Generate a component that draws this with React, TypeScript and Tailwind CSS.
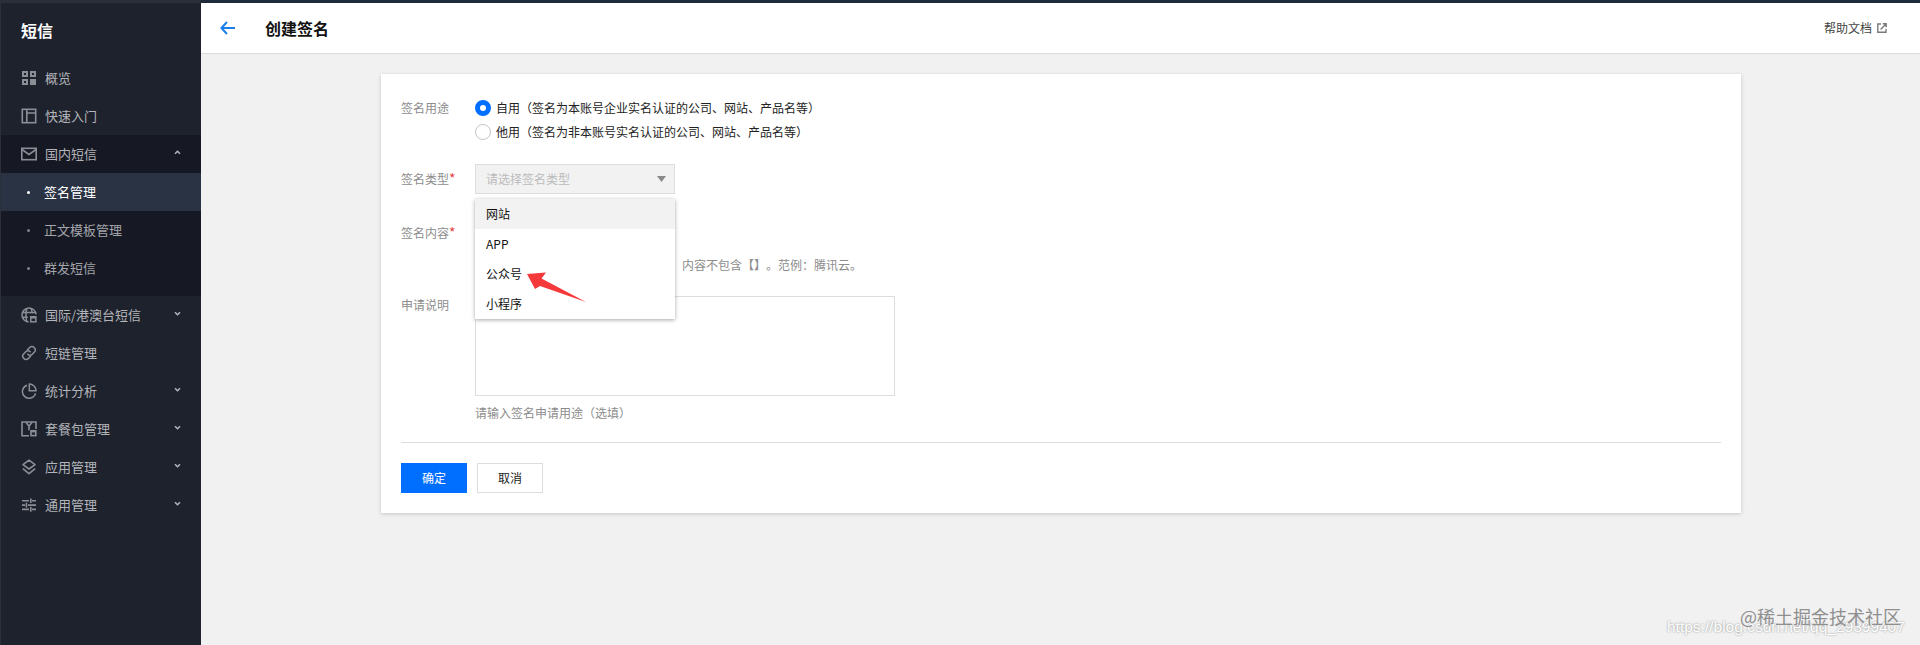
import React from "react";

const C = "#8b8e95";

function IcOverview() {
  return (
    <svg width="16" height="16" viewBox="0 0 16 16" fill={C} fillRule="evenodd">
      <path d="M1 1h6v6H1zM3 3v2h2V3z" />
      <path d="M9 1h6v6H9zM11 3v2h2V3z" />
      <path d="M1 9h6v6H1zM3 11v2h2v-2z" />
      <path d="M9 9h6v6H9z" />
    </svg>
  );
}
function IcBook() {
  return (
    <svg width="16" height="16" viewBox="0 0 16 16" fill="none" stroke={C} strokeWidth="1.6">
      <rect x="1.3" y="1.3" width="13.4" height="13.4" />
      <path d="M5.8 1.3v13.4M5.8 5h8.9" />
    </svg>
  );
}
function IcMail() {
  return (
    <svg width="16" height="16" viewBox="0 0 16 16" fill="none" stroke={C} strokeWidth="1.6">
      <rect x="0.8" y="2.3" width="14.4" height="11.4" />
      <path d="M1 3.5l7 5 7-5" />
    </svg>
  );
}
function IcGlobe() {
  return (
    <svg width="16" height="16" viewBox="0 0 16 16" fill="none" stroke={C} strokeWidth="1.5">
      <path d="M7.6 15A7 7 0 1 1 15 7.4" />
      <path d="M6 1.3C4.6 4 4.6 11 6 14.7M10 1.3c.8 1.6 1.1 3.4 1.2 5.2M1.2 5.6h13.4M1.2 10.2h5.6" />
      <path d="M9 9h6.6v6.6H9z" fill={C} stroke="none" />
      <path d="M10.5 11.5h3.6v2.6h-3.6z" fill="#1e222d" stroke="none" />
    </svg>
  );
}
function IcLink() {
  return (
    <svg width="16" height="16" viewBox="0 0 16 16" fill="none" stroke={C} strokeWidth="1.5" strokeLinecap="round">
      <path d="M6.6 4.6l2-2a3.1 3.1 0 0 1 4.6 0 3.2 3.2 0 0 1 .2 4.5l-2.1 2.2a3.1 3.1 0 0 1-4.5 0" />
      <path d="M9.4 11.4l-2 2a3.1 3.1 0 0 1-4.6 0 3.2 3.2 0 0 1-.2-4.5l2.1-2.2a3.1 3.1 0 0 1 4.5 0" />
    </svg>
  );
}
function IcPie() {
  return (
    <svg width="16" height="16" viewBox="0 0 16 16" fill="none" stroke={C} strokeWidth="1.5">
      <path d="M6 2.2A6.7 6.7 0 1 0 14.6 10.4" />
      <path d="M8.3 1a6.7 6.7 0 0 1 6.7 6.8H8.3z" />
    </svg>
  );
}
function IcPackage() {
  return (
    <svg width="16" height="16" viewBox="0 0 16 16" fill="none" stroke={C} strokeWidth="1.6">
      <path d="M8 14.8H1V1h14v7" />
      <path d="M5 1.2l3 4 3-4" />
      <path d="M8 5.2v4" />
      <path d="M9.2 9h6.4v6.4H9.2z" fill={C} stroke="none" />
      <path d="M10.8 11.4h3.2v2.4h-3.2z" fill="#1e222d" stroke="none" />
    </svg>
  );
}
function IcLayers() {
  return (
    <svg width="16" height="16" viewBox="0 0 16 16" fill="none" stroke={C} strokeWidth="1.6" strokeLinejoin="round">
      <path d="M8 1.2l6 4.4-6 4.4-6-4.4z" />
      <path d="M1.8 9.6L8 14.6l6.2-5" />
    </svg>
  );
}
function IcSliders() {
  return (
    <svg width="16" height="16" viewBox="0 0 16 16" fill={C}>
      <path d="M1 3h7v1.6H1zM11 3h4v1.6h-4zM9 1.5h1.6v4.6H9z" />
      <path d="M1 7.3h3v1.6H1zM7 7.3h8v1.6H7zM4.6 5.8h1.6v4.6H4.6z" />
      <path d="M1 11.6h7v1.6H1zM11 11.6h4v1.6h-4zM9 10.1h1.6v4.6H9z" />
    </svg>
  );
}
function Chevron({ up }: { up?: boolean }) {
  return (
    <svg width="7" height="5" viewBox="0 0 8 6" fill="none" stroke="#b4b6bb" strokeWidth="1.8" className={`mb-[3px] ${up ? "" : "rotate-180"}`}>
      <path d="M1 4.5l3-3 3 3" />
    </svg>
  );
}

function NavRow({
  icon,
  label,
  chevron,
  up,
  dark,
}: {
  icon: React.ReactNode;
  label: string;
  chevron?: boolean;
  up?: boolean;
  dark?: boolean;
}) {
  return (
    <div className={`relative flex h-[38px] items-center pl-[20px] pr-[20px] text-[13px] text-[#b3b5ba] ${dark ? "bg-[#161823]" : ""}`}>
      <span className="mr-[8px] flex h-[16px] w-[16px] items-center justify-center">{icon}</span>
      <span className="flex-1 whitespace-nowrap">{label}</span>
      {chevron && <Chevron up={up} />}
    </div>
  );
}

function SubRow({ label, active }: { label: string; active?: boolean }) {
  return (
    <div className={`flex h-[38px] items-center pl-[26px] text-[13px] ${active ? "bg-[#2a3344] text-white" : "text-[#a4a6ac]"}`}>
      <span className={`mr-[14px] h-[3px] w-[3px] rounded-full ${active ? "bg-white" : "bg-[#7f818a]"}`} />
      {label}
    </div>
  );
}

function Radio({ checked, children }: { checked?: boolean; children: React.ReactNode }) {
  return (
    <div className="flex h-[24px] items-center text-[12px] text-[#222]">
      <span className={`mr-[5px] h-[16px] w-[16px] rounded-full bg-white ${checked ? "border-[5px] border-[#006eff]" : "border border-[#c4c4c4]"}`} />
      <span className="whitespace-nowrap">{children}</span>
    </div>
  );
}

function Label({ children, req }: { children: React.ReactNode; req?: boolean }) {
  return (
    <div className="w-[74px] shrink-0 text-[12px] leading-[18px] text-[#8c8c8c]">
      {children}
      {req && <span className="text-[14px] leading-[14px] text-[#e54545]">*</span>}
    </div>
  );
}

export default function App() {
  return (
    <div
      className="relative flex h-[645px] w-[1920px] flex-col overflow-hidden bg-[#f1f1f1] [text-spacing-trim:space-all]"
      style={{ fontFamily: '"Noto Sans CJK SC", "Liberation Sans", sans-serif' }}
    >
      <div className="flex h-[3px] shrink-0">
        <div className="w-[201px] bg-[#2b2f3a]" />
        <div className="flex-1 bg-[#1f2a3a]" />
      </div>
      <div className="flex flex-1">
        <aside className="flex w-[201px] shrink-0 flex-col border-l border-[#2b2f3a] bg-[#1e222d]">
          <div className="flex h-[56px] items-center pb-[3px] pl-[20px] text-[16px] font-bold text-white">短信</div>
          <NavRow icon={<IcOverview />} label="概览" />
          <NavRow icon={<IcBook />} label="快速入门" />
          <NavRow icon={<IcMail />} label="国内短信" chevron up dark />
          <div className="bg-[#161823] pb-[9px]">
            <SubRow label="签名管理" active />
            <SubRow label="正文模板管理" />
            <SubRow label="群发短信" />
          </div>
          <NavRow icon={<IcGlobe />} label="国际/港澳台短信" chevron />
          <NavRow icon={<IcLink />} label="短链管理" />
          <NavRow icon={<IcPie />} label="统计分析" chevron />
          <NavRow icon={<IcPackage />} label="套餐包管理" chevron />
          <NavRow icon={<IcLayers />} label="应用管理" chevron />
          <NavRow icon={<IcSliders />} label="通用管理" chevron />
        </aside>

        <main className="flex flex-1 flex-col">
          <header className="flex h-[51px] shrink-0 items-center border-b border-[#dcdcdc] bg-white pl-[19px] pr-[33px]">
            <svg width="16" height="14" viewBox="0 0 16 14" fill="none" stroke="#1a7fe8" strokeWidth="2">
              <path d="M7 1L1.4 7 7 13M1.6 7H15" />
            </svg>
            <h1 className="ml-[29px] flex-1 text-[16px] font-bold text-[#111]">创建签名</h1>
            <span className="text-[12px] text-[#444]">帮助文档</span>
            <svg className="ml-[5px]" width="10" height="10" viewBox="0 0 10 10" fill="none" stroke="#7a7a7a" strokeWidth="1.4">
              <path d="M4 1H.8v8.2H9V6M3.6 6.4L9 1M5.8 .8h3.4v3.4" />
            </svg>
          </header>

          <div className="pl-[180px] pt-[20px]">
            <section className="relative w-[1360px] bg-white px-[20px] pb-[20px] pt-[22px] shadow-[0_1px_4px_rgba(0,0,0,0.18)]">
              <div className="flex">
                <div className="w-[74px] shrink-0 pt-[3px]">
                  <Label>签名用途</Label>
                </div>
                <div>
                  <Radio checked>自用（签名为本账号企业实名认证的公司、网站、产品名等）</Radio>
                  <Radio>他用（签名为非本账号实名认证的公司、网站、产品名等）</Radio>
                </div>
              </div>

              <div className="mt-[20px] flex items-center">
                <Label req>签名类型</Label>
                <div className="flex h-[30px] w-[200px] items-center justify-between border border-[#dddddd] bg-[#f2f2f2] pl-[10px] pr-[8px] text-[12px] text-[#bbbbbb]">
                  请选择签名类型
                  <svg width="9" height="6" viewBox="0 0 9 6" fill="#8a8a8a">
                    <path d="M0 0h9L4.5 6z" />
                  </svg>
                </div>
              </div>

              <div className="mt-[24px] flex items-center">
                <Label req>签名内容</Label>
                <div className="h-[30px] w-[200px] border border-[#dddddd]" />
              </div>
              <div className="mt-[8px] pl-[281px] text-[12px] leading-[18px] text-[#8c8c8c]">内容不包含【】。范例：腾讯云。</div>

              <div className="mt-[22px] flex">
                <Label>申请说明</Label>
                <div>
                  <div className="h-[100px] w-[420px] border border-[#dddddd] bg-white" />
                  <div className="mt-[8px] text-[12px] leading-[18px] text-[#8c8c8c]">请输入签名申请用途（选填）</div>
                </div>
              </div>

              <div className="mt-[20px] h-px bg-[#dddddd]" />

              <div className="mt-[20px] flex gap-[10px] text-[12px]">
                <div className="flex h-[30px] w-[66px] items-center justify-center bg-[#006eff] text-white">确定</div>
                <div className="flex h-[30px] w-[66px] items-center justify-center border border-[#dddddd] bg-white text-[#222]">取消</div>
              </div>

              {/* dropdown popup */}
              <div className="absolute left-[94px] top-[125px] w-[200px] bg-white text-[12px] text-[#111] shadow-[0_1px_4px_rgba(0,0,0,0.35)]">
                <div className="flex h-[30px] items-center bg-[#f2f2f2] pl-[11px]">网站</div>
                <div className="flex h-[30px] items-center pl-[11px]">APP</div>
                <div className="flex h-[30px] items-center pl-[11px]">公众号</div>
                <div className="flex h-[30px] items-center pl-[11px]">小程序</div>
              </div>

              {/* annotation arrow */}
              <svg className="absolute left-[145px] top-[195px]" width="62" height="36" viewBox="0 0 62 36" fill="#f5393a">
                <path d="M1 5L20 3.6 15.5 9.6 60 33 14 17 9 20z" />
              </svg>
            </section>
          </div>
        </main>
      </div>

      {/* watermark */}
      <div
        className="absolute left-[1667px] top-[619px] whitespace-nowrap text-[15.5px] leading-[16px] text-white [text-shadow:0_0_2px_rgba(0,0,0,0.45)]"
        style={{ fontFamily: '"Liberation Sans", sans-serif' }}
      >
        https://blog.csdn.net/qq_29399407
      </div>
      <div className="absolute left-[1740px] top-[603px] whitespace-nowrap text-[18px] leading-[26px] text-[#8f8f8f]">@稀土掘金技术社区</div>
    </div>
  );
}
